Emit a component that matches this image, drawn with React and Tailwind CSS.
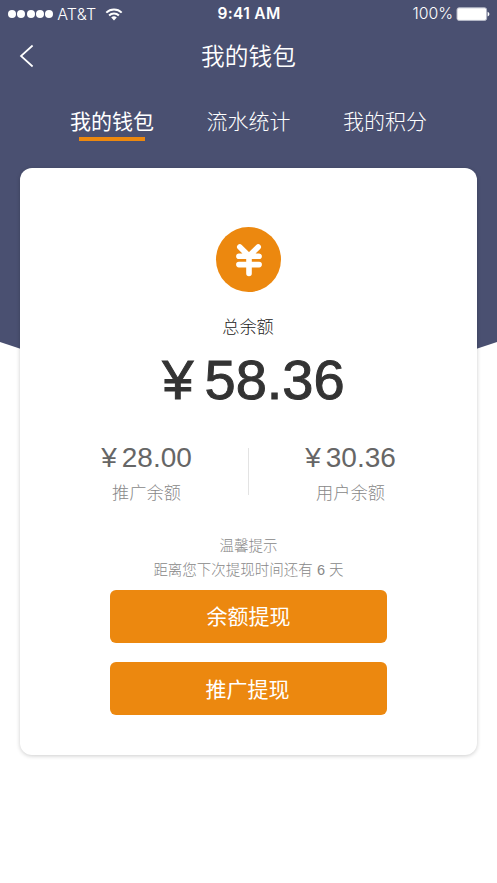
import React from "react";

const tabs = ["我的钱包", "流水统计", "我的积分"];
const balances = [
  { amount: "28.00", label: "推广余额" },
  { amount: "30.36", label: "用户余额" },
];

function StatusBar() {
  return (
    <div className="flex h-7 items-center justify-between pl-2 pr-[7px] text-white">
      <div className="flex w-[150px] items-center">
        <div className="flex gap-[1.3px]">
          {[0, 1, 2, 3, 4].map((i) => (
            <span key={i} className="h-2 w-2 rounded-full bg-white" />
          ))}
        </div>
        <span className="ml-[4px] w-[40px] whitespace-nowrap text-[16px] font-light tracking-[0.2px]">AT&amp;T</span>
        <svg className="ml-[8px] h-[13px] w-[18px]" viewBox="0 0 18 13" fill="none" stroke="white" strokeWidth="2">
          <path d="M1.3 4.6a11 11 0 0 1 15.4 0" />
          <path d="M4.1 7.5a7 7 0 0 1 9.8 0" />
          <path d="M9 12.4 6.2 9.6a4 4 0 0 1 5.6 0z" fill="white" stroke="none" />
        </svg>
      </div>
      <span className="whitespace-nowrap text-[15.500px] font-semibold tracking-[0.35px]">9:41 AM</span>
      <div className="flex w-[150px] items-center justify-end">
        <span className="whitespace-nowrap text-[15.800px] font-light">100%</span>
        <svg className="ml-[3px] h-[14px] w-[34px]" viewBox="0 0 34 14">
          <rect x="1" y="0.8" width="29.6" height="12.6" rx="2" fill="white" stroke="#b6b9c8" strokeWidth="1" />
          <path d="M31.600 4.800c2.400 1 2.400 3.800 0 4.800z" fill="white" />
        </svg>
      </div>
    </div>
  );
}

export default function App() {
  return (
    <div className="relative isolate h-[883px] w-[497px] overflow-hidden bg-white font-['Inter','Noto_Sans_CJK_SC',sans-serif]">
      <svg className="absolute left-0 top-0 -z-10 h-[430px] w-[497px]" viewBox="0 0 497 430">
        <path d="M0 0H497V342Q248.500 430 0 342Z" fill="#4a5071" />
      </svg>

      <StatusBar />

      <header className="grid h-14 grid-cols-[60px_1fr_60px] items-center text-white">
        <svg className="ml-[19px] h-6 w-4" viewBox="0 0 16 24" fill="none" stroke="white" strokeWidth="1.7">
          <path d="M13.600 1.500 2 12l11.600 10.500" />
        </svg>
        <h1 className="pt-[2px] text-center text-[23.700px] font-[350] leading-6">我的钱包</h1>
      </header>

      <nav className="flex h-[84px] justify-center gap-[52.500px] pt-[25px] text-white">
        {tabs.map((tab, i) => (
          <div key={tab} className="flex w-[84px] flex-col items-center">
            <span className={i === 0 ? "whitespace-nowrap text-[21px] leading-[26px]" : "whitespace-nowrap text-[21px] font-light leading-[26px]"}>{tab}</span>
            {i === 0 && <span className="mt-[2px] h-1 w-[66px] bg-[#ec880f]" />}
          </div>
        ))}
      </nav>

      <main className="mx-5 flex h-[587px] flex-col items-center rounded-xl bg-white pt-[59px] shadow-[0_1px_4px_rgba(0,0,0,0.2)]">
        <div className="flex h-[65px] w-[65px] items-center justify-center rounded-full bg-[#ec880f]">
          <svg className="h-[34px] w-[28px]" viewBox="0 0 28 34" fill="none" stroke="white" strokeWidth="5.600" strokeLinecap="round" strokeLinejoin="round">
            <path d="M4.800 4 14 13 23.200 4M14 13v17.500M3.900 13.300h20.200M3.900 21.600h20.200" />
          </svg>
        </div>
        <div className="mt-[23px] pr-px text-[17.200px] font-light leading-6 text-[#222]">总余额</div>
        <div className="mt-[9px] flex h-16 items-center gap-[11px] pl-[10px] font-['Liberation_Sans',sans-serif] text-[56px] leading-[64px] text-[#333] [-webkit-text-stroke:1px_#333]">
          <span>¥</span>
          <span>58.36</span>
        </div>

        <div className="mt-[28px] flex h-[60px] w-[407px]">
          {balances.map(({ amount, label }, i) => (
            <React.Fragment key={label}>
              {i === 1 && <span className="mt-[8px] h-[47px] w-px bg-[#e3e3e3]" />}
              <div className="flex flex-1 flex-col items-center">
                <div className="mt-px flex items-center gap-[5px] font-['Liberation_Sans',sans-serif] text-[28px] leading-[34px] text-[#666]">
                  <span>¥</span>
                  <span>{amount}</span>
                </div>
                <span className="mt-[6px] text-[17.200px] font-light leading-6 text-[#888]">{label}</span>
              </div>
            </React.Fragment>
          ))}
        </div>

        <div className="mt-[34px] text-center text-[14.500px] font-light leading-[24px] text-[#888]">
          <p>温馨提示</p>
          <p>距离您下次提现时间还有 <span className="font-['Liberation_Sans',sans-serif]">6</span> 天</p>
        </div>
        <button className="mt-[7.500px] h-[53px] w-[277px] shrink-0 rounded-md bg-[#ec880f] pt-[2px] text-[21px] text-white">余额提现</button>
        <button className="mt-[19.500px] h-[53px] w-[277px] shrink-0 rounded-md bg-[#ec880f] pr-[2px] pt-[2px] text-[21px] text-white">推广提现</button>
      </main>
    </div>
  );
}
